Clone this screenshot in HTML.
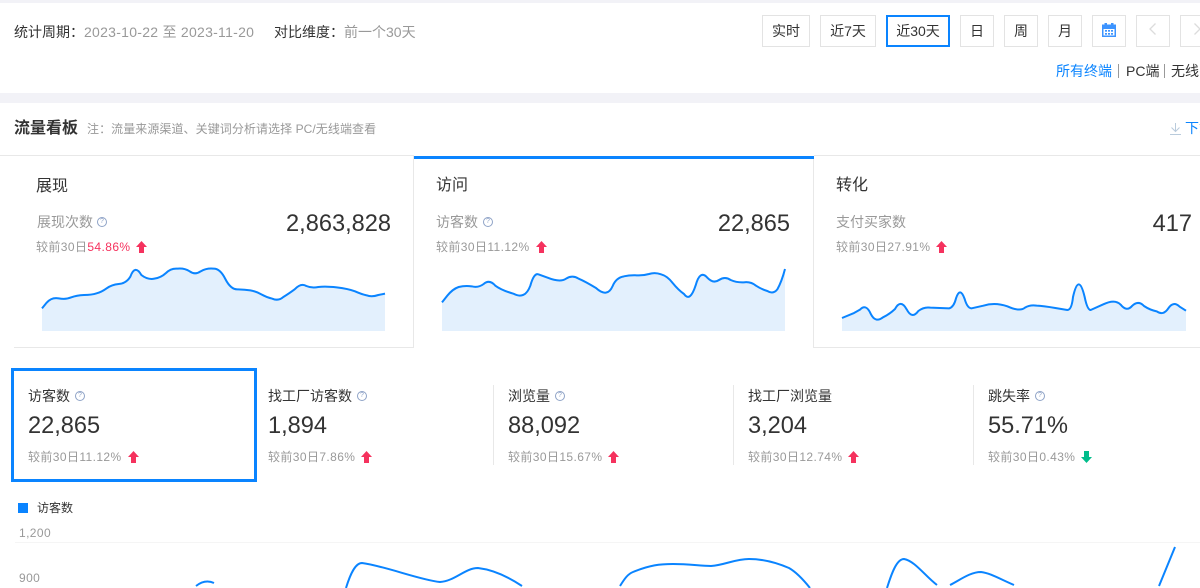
<!DOCTYPE html>
<html lang="zh">
<head>
<meta charset="utf-8">
<title>流量看板</title>
<style>
html,body{margin:0;padding:0;background:#fff}
body{width:1200px;height:583px;overflow:hidden;position:relative;font-family:"Liberation Sans","WenQuanYi Zen Hei","Noto Sans CJK SC",sans-serif;color:#333}
.a{position:absolute;white-space:nowrap;line-height:20px}
.g{color:#999}
.s14{font-size:14px}.s12{font-size:12px}.s16{font-size:16px}
.s12.g{letter-spacing:.4px}
.d{letter-spacing:.27px}
.num{font-size:23.600px;line-height:30px;color:#333}
.btn{position:absolute;top:15px;height:30px;border:1px solid #e3e3e3;font-size:14px;line-height:30px;text-align:center;box-sizing:content-box;color:#333}
.bar{position:absolute;background:#f2f2f7;left:0;width:1200px}
.ln{position:absolute;background:#e8e8e8}
.red{color:#f5325e}
svg{position:absolute;display:block;overflow:visible}
.help{position:absolute;width:8px;height:8px;border:1px solid #8fa3c7;border-radius:50%;font-size:7px;line-height:8px;text-align:center;color:#8fa3c7;box-sizing:content-box}
</style>
</head>
<body>
<div class="bar" style="top:0;height:3px"></div>
<div class="bar" style="top:93px;height:10px"></div>

<div class="a s14" style="left:14px;top:22px">统计周期：<span class="g d">2023-10-22 至 2023-11-20</span></div>
<div class="a s14" style="left:274px;top:22px">对比维度：<span class="g">前一个30天</span></div>

<div class="btn" style="left:762px;width:46px">实时</div>
<div class="btn" style="left:820px;width:54px">近7天</div>
<div class="btn" style="left:886px;width:60px;height:28px;line-height:28px;border:2px solid #0a84ff">近30天</div>
<div class="btn" style="left:960px;width:32px">日</div>
<div class="btn" style="left:1004px;width:32px">周</div>
<div class="btn" style="left:1048px;width:32px">月</div>
<div class="btn" style="left:1092px;width:32px"></div>
<svg style="left:1102px;top:23px" width="14" height="14" viewBox="0 0 14 14"><rect x="0" y="1.500" width="14" height="12.500" fill="#3d94ff"/><rect x="2.500" y="0" width="2.500" height="3" fill="#3d94ff"/><rect x="9" y="0" width="2.500" height="3" fill="#3d94ff"/><rect x="1.500" y="6" width="11" height="6.500" fill="#fff"/><g fill="#3d94ff"><rect x="3" y="7" width="2" height="1.700"/><rect x="6" y="7" width="2" height="1.700"/><rect x="9" y="7" width="2" height="1.700"/><rect x="3" y="10" width="2" height="1.700"/><rect x="6" y="10" width="2" height="1.700"/><rect x="9" y="10" width="2" height="1.700"/></g></svg>
<div class="btn" style="left:1136px;width:32px"></div>
<svg style="left:1149px;top:23px" width="8" height="12" viewBox="0 0 8 12"><path d="M6.500 .5 L1 6 L6.500 11.500" fill="none" stroke="#dcdcdc" stroke-width="1.300"/></svg>
<div class="btn" style="left:1180px;width:32px"></div>
<svg style="left:1193px;top:23px" width="8" height="12" viewBox="0 0 8 12"><path d="M1.500 .5 L7 6 L1.500 11.500" fill="none" stroke="#dcdcdc" stroke-width="1.300"/></svg>

<div class="a s14" style="left:1056px;top:61px;color:#0a84ff">所有终端</div>
<div style="position:absolute;left:1118px;top:64px;width:1px;height:14px;background:#999"></div>
<div class="a s14" style="left:1126px;top:61px">PC端</div>
<div style="position:absolute;left:1164px;top:64px;width:1px;height:14px;background:#999"></div>
<div class="a s14" style="left:1171px;top:61px">无线</div>

<div class="a s16" style="left:14px;top:119px;font-weight:bold">流量看板</div>
<div class="a s12" style="left:87px;top:119px;color:#999;letter-spacing:.07px">注：流量来源渠道、关键词分析请选择 PC/无线端查看</div>
<svg style="left:1170px;top:122px" width="11" height="13" viewBox="0 0 11 13"><path d="M5.500 1 V9 M1.500 5.500 L5.500 9.500 L9.500 5.500 M0 12.500 H11" fill="none" stroke="#b9cbdc" stroke-width="1"/></svg>
<div class="a s14" style="left:1185px;top:118px;color:#0a84ff">下载</div>

<!-- card lines -->
<div class="ln" style="left:0;top:155px;width:414px;height:1px"></div>
<div class="ln" style="left:814px;top:155px;width:386px;height:1px"></div>
<div class="ln" style="left:14px;top:347px;width:400px;height:1px"></div>
<div class="ln" style="left:413px;top:156px;width:1px;height:192px"></div>
<div class="ln" style="left:813px;top:156px;width:1px;height:192px"></div>
<div class="ln" style="left:813px;top:347px;width:387px;height:1px"></div>
<div style="position:absolute;left:414px;top:156px;width:400px;height:3px;background:#0a84ff"></div>

<!-- card 1 -->
<div class="a s16" style="left:36px;top:177px">展现</div>
<div class="a s14 g" style="left:37px;top:212px">展现次数</div>
<div class="help" style="left:97px;top:217px">?</div>
<div class="a num" style="right:809px;top:209px">2,863,828</div>
<div class="a s12 g" style="left:36px;top:237px">较前30日<span class="red">54.86%</span></div>
<svg style="left:136px;top:241px" width="11" height="12" viewBox="0 0 11 12"><path d="M5.500 0 L11 6 H8 V12 H3 V6 H0 Z" fill="#f5325e"/></svg>
<svg style="left:0;top:150px" width="410" height="200" viewBox="0 0 1230 600">
<path fill="#e3f0fd" d="M126,475 L140,458 Q155,441 176,445 Q198,449 214,442 Q230,436 252,435 Q275,435 290,430 Q305,426 320,415 Q335,404 356,402 Q378,401 391,380 Q405,342 424,375 Q443,390 463,386 Q483,383 498,369 Q513,354 533,356 Q553,354 569,364 Q585,376 602,364 Q620,354 640,356 Q660,355 676,387 Q693,420 714,418 Q735,419 751,421 Q768,424 784,433 Q800,442 817,446 Q835,454 850,441 Q865,432 884,418 Q903,398 919,408 Q935,415 955,411 Q975,408 1010,412 Q1045,416 1065,424 Q1085,433 1100,436 Q1115,442 1135,435 L1155,431 V543 H126 Z"/>
<path fill="none" stroke="#0a84ff" stroke-width="6" stroke-linejoin="round" d="M126,475 L140,458 Q155,441 176,445 Q198,449 214,442 Q230,436 252,435 Q275,435 290,430 Q305,426 320,415 Q335,404 356,402 Q378,401 391,380 Q405,342 424,375 Q443,390 463,386 Q483,383 498,369 Q513,354 533,356 Q553,354 569,364 Q585,376 602,364 Q620,354 640,356 Q660,355 676,387 Q693,420 714,418 Q735,419 751,421 Q768,424 784,433 Q800,442 817,446 Q835,454 850,441 Q865,432 884,418 Q903,398 919,408 Q935,415 955,411 Q975,408 1010,412 Q1045,416 1065,424 Q1085,433 1100,436 Q1115,442 1135,435 L1155,431"/>
</svg>

<!-- card 2 -->
<div class="a s16" style="left:436px;top:176px">访问</div>
<div class="a s14 g" style="left:436px;top:212px">访客数</div>
<div class="help" style="left:483px;top:217px">?</div>
<div class="a num" style="right:410px;top:209px">22,865</div>
<div class="a s12 g" style="left:436px;top:237px">较前30日11.12%</div>
<svg style="left:536px;top:241px" width="11" height="12" viewBox="0 0 11 12"><path d="M5.500 0 L11 6 H8 V12 H3 V6 H0 Z" fill="#f5325e"/></svg>
<svg style="left:410px;top:150px" width="400" height="200" viewBox="0 0 1200 600">
<path fill="#e3f0fd" d="M96,457 L112,437 Q128,417 146,411 Q165,406 185,409 Q205,414 221,402 Q238,387 256,407 Q275,421 310,431 Q345,450 361,407 Q372,368 385,373 L413,383 Q450,398 468,386 Q487,374 506,386 Q525,394 558,414 Q592,445 608,408 Q618,383 642,379 Q660,375 680,376 Q700,377 717,372 Q735,366 753,373 Q772,378 788,399 Q805,420 822,432 Q840,458 857,406 Q870,358 892,383 Q910,402 927,390 Q945,378 962,390 Q980,398 1001,397 Q1022,394 1038,407 Q1055,418 1072,423 Q1090,434 1102,418 Q1115,395 1125,357 V543 H96 Z"/>
<path fill="none" stroke="#0a84ff" stroke-width="6" stroke-linejoin="round" d="M96,457 L112,437 Q128,417 146,411 Q165,406 185,409 Q205,414 221,402 Q238,387 256,407 Q275,421 310,431 Q345,450 361,407 Q372,368 385,373 L413,383 Q450,398 468,386 Q487,374 506,386 Q525,394 558,414 Q592,445 608,408 Q618,383 642,379 Q660,375 680,376 Q700,377 717,372 Q735,366 753,373 Q772,378 788,399 Q805,420 822,432 Q840,458 857,406 Q870,358 892,383 Q910,402 927,390 Q945,378 962,390 Q980,398 1001,397 Q1022,394 1038,407 Q1055,418 1072,423 Q1090,434 1102,418 Q1115,395 1125,357"/>
</svg>

<!-- card 3 -->
<div class="a s16" style="left:836px;top:176px">转化</div>
<div class="a s14 g" style="left:836px;top:212px">支付买家数</div>
<div class="a num" style="right:8px;top:209px">417</div>
<div class="a s12 g" style="left:836px;top:237px">较前30日27.91%</div>
<svg style="left:936px;top:241px" width="11" height="12" viewBox="0 0 11 12"><path d="M5.500 0 L11 6 H8 V12 H3 V6 H0 Z" fill="#f5325e"/></svg>
<svg style="left:810px;top:150px" width="390" height="200" viewBox="0 0 1170 600">
<path fill="#e3f0fd" d="M96,504 L130,490 L150,479 Q168,460 182,491 Q196,520 219,502 Q238,493 255,477 Q272,446 290,478 Q306,509 325,483 Q342,470 361,473 L418,475 Q432,470 438,445 Q450,408 464,447 Q472,475 485,475 L520,467 Q555,456 592,469 Q630,486 645,473 Q660,464 680,467 Q700,468 736,474 L772,480 Q785,480 789,441 Q806,365 824,441 Q832,480 842,480 L880,463 Q915,446 932,464 Q950,487 967,467 Q985,450 1002,468 Q1020,480 1040,484 Q1060,498 1075,475 Q1090,452 1109,470 L1128,482 V543 H96 Z"/>
<path fill="none" stroke="#0a84ff" stroke-width="6" stroke-linejoin="round" d="M96,504 L130,490 L150,479 Q168,460 182,491 Q196,520 219,502 Q238,493 255,477 Q272,446 290,478 Q306,509 325,483 Q342,470 361,473 L418,475 Q432,470 438,445 Q450,408 464,447 Q472,475 485,475 L520,467 Q555,456 592,469 Q630,486 645,473 Q660,464 680,467 Q700,468 736,474 L772,480 Q785,480 789,441 Q806,365 824,441 Q832,480 842,480 L880,463 Q915,446 932,464 Q950,487 967,467 Q985,450 1002,468 Q1020,480 1040,484 Q1060,498 1075,475 Q1090,452 1109,470 L1128,482"/>
</svg>

<!-- metrics -->
<div style="position:absolute;left:11px;top:368px;width:246px;height:114px;border:3px solid #0a84ff;box-sizing:border-box"></div>
<div class="ln" style="left:493px;top:385px;width:1px;height:80px"></div>
<div class="ln" style="left:733px;top:385px;width:1px;height:80px"></div>
<div class="ln" style="left:973px;top:385px;width:1px;height:80px"></div>

<div class="a s14" style="left:28px;top:386px">访客数</div><div class="help" style="left:75px;top:391px">?</div>
<div class="a num" style="left:28px;top:411px">22,865</div>
<div class="a s12 g" style="left:28px;top:447px">较前30日11.12%</div>
<svg style="left:128px;top:451px" width="11" height="12" viewBox="0 0 11 12"><path d="M5.500 0 L11 6 H8 V12 H3 V6 H0 Z" fill="#f5325e"/></svg>

<div class="a s14" style="left:268px;top:386px">找工厂访客数</div><div class="help" style="left:357px;top:391px">?</div>
<div class="a num" style="left:268px;top:411px">1,894</div>
<div class="a s12 g" style="left:268px;top:447px">较前30日7.86%</div>
<svg style="left:361px;top:451px" width="11" height="12" viewBox="0 0 11 12"><path d="M5.500 0 L11 6 H8 V12 H3 V6 H0 Z" fill="#f5325e"/></svg>

<div class="a s14" style="left:508px;top:386px">浏览量</div><div class="help" style="left:555px;top:391px">?</div>
<div class="a num" style="left:508px;top:411px">88,092</div>
<div class="a s12 g" style="left:508px;top:447px">较前30日15.67%</div>
<svg style="left:608px;top:451px" width="11" height="12" viewBox="0 0 11 12"><path d="M5.500 0 L11 6 H8 V12 H3 V6 H0 Z" fill="#f5325e"/></svg>

<div class="a s14" style="left:748px;top:386px">找工厂浏览量</div>
<div class="a num" style="left:748px;top:411px">3,204</div>
<div class="a s12 g" style="left:748px;top:447px">较前30日12.74%</div>
<svg style="left:848px;top:451px" width="11" height="12" viewBox="0 0 11 12"><path d="M5.500 0 L11 6 H8 V12 H3 V6 H0 Z" fill="#f5325e"/></svg>

<div class="a s14" style="left:988px;top:386px">跳失率</div><div class="help" style="left:1035px;top:391px">?</div>
<div class="a num" style="left:988px;top:411px">55.71%</div>
<div class="a s12 g" style="left:988px;top:447px">较前30日0.43%</div>
<svg style="left:1081px;top:451px" width="11" height="12" viewBox="0 0 11 12"><path d="M5.500 12 L11 6 H8 V0 H3 V6 H0 Z" fill="#00bd8b"/></svg>

<!-- chart -->
<div style="position:absolute;left:18px;top:503px;width:10px;height:10px;background:#0a84ff"></div>
<div class="a s12" style="left:37px;top:498px">访客数</div>
<div class="a s12 g" style="left:19px;top:523px">1,200</div>
<div class="a s12 g" style="left:19px;top:568px">900</div>
<div style="position:absolute;left:15px;top:542px;width:1185px;height:1px;background:#f5f5f5"></div>
<svg style="left:0;top:0" width="1200" height="583" viewBox="0 0 1200 583">
<path fill="none" stroke="#0a84ff" stroke-width="2" stroke-linejoin="round" d="M196 586 Q205 579 214 583 M346 588 C350 575 355 563 362 563 C385 566 420 580 440 582 C455 581 465 568 478 568 C495 570 510 578 522 586 M620 586 C625 578 628 574 633 572 C650 565 660 564 673 564 C690 564 700 566 711 566 C725 565 735 559 749 559 C762 559 775 562 789 568 C796 572 802 578 810 588 M887 588 C892 572 897 559 904 559 C915 561 925 576 937 585 M950 585 C960 580 970 572 981 572 C990 573 1000 579 1014 585 M1159 586 L1175 547"/>
</svg>
</body>
</html>
